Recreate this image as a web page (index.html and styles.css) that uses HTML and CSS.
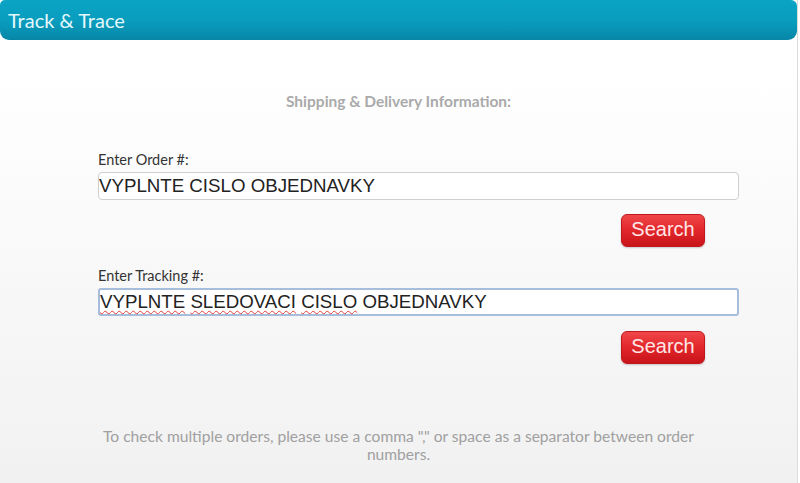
FILE: index.html
```html
<!DOCTYPE html>
<html>
<head>
<meta charset="utf-8">
<link rel="stylesheet" href="styles.css">
</head>
<body>
<div class="panel">
  <div class="header">Track &amp; Trace</div>
  <div class="content">
    <div class="subtitle">Shipping &amp; Delivery Information:</div>
    <div class="form">
      <div class="field">
        <div class="label">Enter Order #:</div>
        <div class="input">VYPLNTE CISLO OBJEDNAVKY</div>
        <div class="actions"><button class="btn">Search</button></div>
      </div>
      <div class="field second">
        <div class="label">Enter Tracking #:</div>
        <div class="input focus"><span class="sp">VYPLNTE</span> <span class="sp">SLEDOVACI</span> <span class="sp">CISLO</span> OBJEDNAVKY</div>
        <div class="actions"><button class="btn">Search</button></div>
      </div>
    </div>
    <p class="note">To check multiple orders, please use a comma "," or space as a separator between order<br>numbers.</p>
  </div>
</div>
</body>
</html>
```
FILE: styles.css
```css
html, body {
  margin: 0;
  padding: 0;
  background: #fff;
}
.panel {
  width: 797px;
  height: 483px;
  border-right: 1px solid #dcdcdc;
  background: linear-gradient(to bottom, #ffffff 0%, #ffffff 15%, #f1f1f1 100%);
  font-family: Lato, "Open Sans", sans-serif;
}
.header {
  height: 40px;
  box-sizing: border-box;
  padding: 9px 0 0 8px;
  background: linear-gradient(to bottom, #0aa4c5 0%, #099cbd 55%, #0886a6 100%);
  border-radius: 5px 6px 9px 9px;
  color: #e4f8fc;
  font-size: 20px;
  line-height: 22px;
}
.content {
  padding-top: 52px;
}
.subtitle {
  text-align: center;
  color: #aaaaaa;
  font-weight: bold;
  font-size: 15.5px;
  line-height: 18px;
}
.form {
  margin: 42px 0 0 98px;
  width: 641px;
}
.label {
  font-size: 14.5px;
  line-height: 16px;
  color: #333;
  margin-bottom: 4px;
}
.input {
  height: 28px;
  box-sizing: border-box;
  border: 1px solid #cfcfcf;
  border-radius: 4px;
  background: #fff;
  font-family: "Liberation Sans", Arial, sans-serif;
  font-size: 18.7px;
  line-height: 26px;
  color: #222;
  padding-left: 0;
  white-space: nowrap;
}
.input.focus {
  border: 2px solid #a7bddc;
  border-radius: 3px;
  line-height: 24px;
}
.sp {
  text-decoration: underline wavy #e0403a;
  text-decoration-thickness: 1px;
  text-underline-offset: 2px;
}
.actions {
  display: flex;
  justify-content: flex-end;
  padding-right: 34px;
  margin-top: 14px;
}
.btn {
  width: 84px;
  height: 33px;
  border: 1px solid #c0181c;
  border-radius: 6px;
  background: linear-gradient(to bottom, #f0474a 0%, #e1262a 50%, #c8141a 100%);
  color: #ffe6e6;
  font-family: "Liberation Sans", Arial, sans-serif;
  font-size: 20px;
  padding: 0 0 3px 0;
  box-shadow: 0 1px 2px rgba(0,0,0,0.2);
}
.field.second {
  margin-top: 21px;
}
.field.second .actions {
  margin-top: 15px;
}
.note {
  margin: 63px 0 0;
  text-align: center;
  color: #a0a0a0;
  font-size: 15.6px;
  line-height: 18px;
}
```
